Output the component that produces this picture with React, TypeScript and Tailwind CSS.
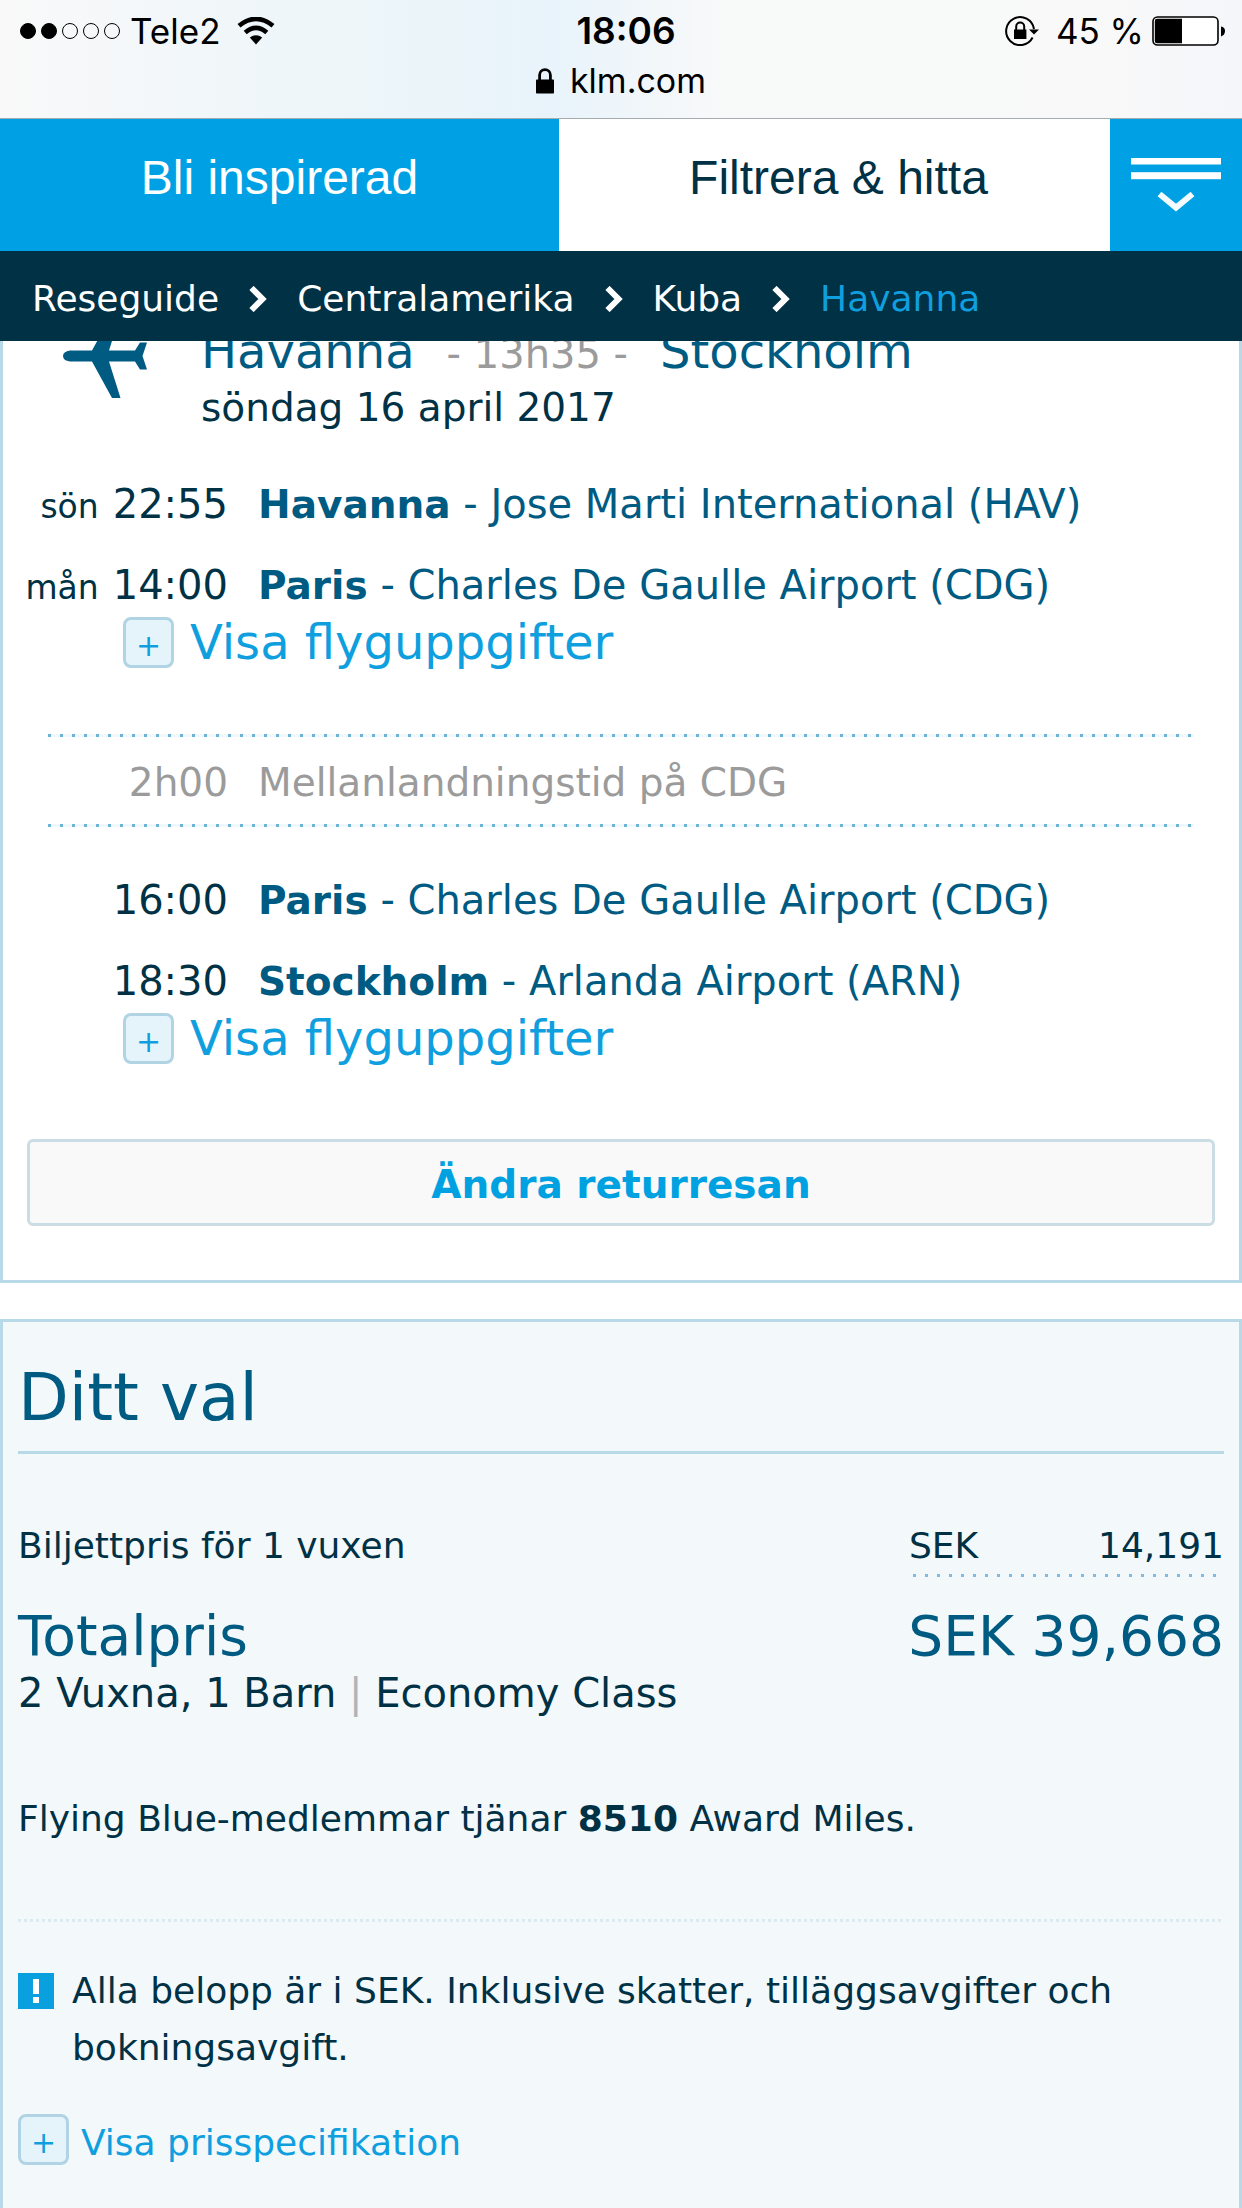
import type { ReactNode } from "react";

const DOTS =
  "h-[3px] bg-[repeating-linear-gradient(90deg,#6db3d6_0_3px,#f1f8fc_3px_12px)]";

function Wifi() {
  return (
    <svg viewBox="0 0 38 28" className="h-7 w-[38px]" aria-hidden="true">
      <path d="M19 27.5 L12.8 20.6 Q19 15.8 25.2 20.6 Z" />
      <path d="M8.2 15.6 Q19 6.2 29.8 15.6" fill="none" stroke="#000" strokeWidth="4.6" />
      <path d="M2 8.8 Q19 -5 36 8.8" fill="none" stroke="#000" strokeWidth="4.6" />
    </svg>
  );
}

function RotationLock() {
  return (
    <svg viewBox="0 0 36 32" className="h-8 w-9" aria-hidden="true">
      <path
        d="M28.6 22.5 A14 14 0 1 1 30 14"
        fill="none"
        stroke="#000"
        strokeWidth="2"
      />
      <path d="M25 14.5 H35 L30 19.5 Z" />
      <rect x="10" y="14.5" width="12.4" height="9.5" />
      <path d="M12.2 15 V11.5 a4 4 0 0 1 8 0 V15" fill="none" stroke="#000" strokeWidth="2" />
    </svg>
  );
}

function Battery() {
  return (
    <svg viewBox="0 0 74 30" className="h-[30px] w-[74px]" aria-hidden="true">
      <rect x="1" y="1" width="65" height="28" rx="4.5" fill="#fff" stroke="#000" strokeWidth="1.6" />
      <path d="M5 2.8 H30 V27.2 H5 Q2.8 27.2 2.8 25 V5 Q2.8 2.8 5 2.8 Z" />
      <path d="M69 10.5 Q73 11 73 15 Q73 19 69 20.5 Z" />
    </svg>
  );
}

function StatusBar() {
  return (
    <div className="border-b border-[#a5acb0] bg-[linear-gradient(90deg,#f9f9f9_0%,#eff6f9_22%,#ebf5f9_35%,#e8f3fb_44%,#f8f9f9_58%,#f9f9f9_88%,#f5f6fa_100%)] font-['Inter',sans-serif] text-[35px] leading-[48px] text-black">
      <div className="grid grid-cols-3 items-center px-5 pt-[7px]">
        <div className="flex items-center">
          <div className="flex gap-[5px]">
            {[true, true, false, false, false].map((on, i) => (
              <span
                key={i}
                className={
                  on
                    ? "size-4 rounded-full border border-black bg-black"
                    : "size-4 rounded-full border border-black"
                }
              />
            ))}
          </div>
          <span className="ml-[10px]">Tele2</span>
          <span className="ml-4">
            <Wifi />
          </span>
        </div>
        <div className="pl-[10px] text-center text-[37px] font-semibold">18:06</div>
        <div className="-mr-1 flex items-center justify-end">
          <RotationLock />
          <span className="ml-4 text-[35px]">45 %</span>
          <span className="ml-2">
            <Battery />
          </span>
        </div>
      </div>
      <div className="flex items-center justify-center gap-4 pt-[2px] pb-[13px]">
        <svg viewBox="0 0 18 26" className="h-[26px] w-[18px]" aria-hidden="true">
          <rect x="0" y="11.5" width="18" height="14" rx="0.8" />
          <path d="M3.6 12 V7 a5.4 5.4 0 0 1 10.8 0 V12" fill="none" stroke="#000" strokeWidth="2.8" />
        </svg>
        <span className="text-[34px]">klm.com</span>
      </div>
    </div>
  );
}

function Tabs() {
  return (
    <nav className="grid h-[132px] grid-cols-[559fr_551fr_132px] font-['Liberation_Sans',Arial,sans-serif] text-5xl">
      <button className="bg-[#00a1e4] pb-[14px] text-white">Bli inspirerad</button>
      <button className="bg-white pb-[14px] pl-2 text-[#003145]">Filtrera &amp; hitta</button>
      <button className="flex justify-center bg-[#00a1e4] pt-[39px]" aria-label="Meny">
        <svg viewBox="0 0 90 54" className="h-[54px] w-[90px]" aria-hidden="true">
          <rect x="0" y="0" width="90" height="6.5" fill="#fff" />
          <rect x="0" y="14.2" width="90" height="7" fill="#fff" />
          <path d="M28.5 36 L45 49.5 L61.5 36" fill="none" stroke="#f4fbff" strokeWidth="6" />
        </svg>
      </button>
    </nav>
  );
}

function Breadcrumb() {
  return (
    <nav
      aria-label="Sökväg"
      className="flex h-[90px] items-center gap-[30px] bg-[#003145] px-8 pt-[6px] text-4xl text-white"
    >
      {["Reseguide", "Centralamerika", "Kuba"].map((label) => (
        <span key={label} className="flex items-center gap-[30px]">
          <a href="#">{label}</a>
          <svg viewBox="0 0 18 26" className="h-[26px] w-[18px]" aria-hidden="true">
            <path d="M2.5 2 L13.5 13 L2.5 24" fill="none" stroke="#fff" strokeWidth="6" />
          </svg>
        </span>
      ))}
      <a href="#" className="text-[#0f9fdf]">
        Havanna
      </a>
    </nav>
  );
}

function PlusBox() {
  return (
    <span className="flex size-[51px] shrink-0 items-center justify-center rounded-lg border-3 border-[#b0d4e3] bg-[#e5f3fb] pt-[6px] text-3xl leading-9">
      +
    </span>
  );
}

function Stop({ day, time, city, airport }: { day?: string; time: string; city: string; airport: string }) {
  return (
    <div className="flex h-12 text-[40px] leading-[48px]">
      <div className="flex w-[225px] shrink-0 items-baseline justify-end gap-[14px]">
        {day && <span className="text-[33px]">{day}</span>}
        <span>{time}</span>
      </div>
      <div className="ml-[30px] text-[#005b82]">
        <b className="text-[39px]">{city}</b> - {airport}
      </div>
    </div>
  );
}

function Leg({ children }: { children: ReactNode }) {
  return (
    <div>
      <div className="flex flex-col gap-[33px]">{children}</div>
      <button className="mt-2 ml-[120px] flex items-center gap-4 text-5xl leading-[51px] text-[#0f9fdf]">
        <PlusBox />
        Visa flyguppgifter
      </button>
    </div>
  );
}

function ReturnFlight() {
  return (
    <section className="-mt-5 border-x-3 border-b-3 border-[#b8dae8] bg-white pb-[54px] text-[39px]">
      <div className="flex">
        <svg viewBox="0 0 84 84" className="mt-[-7px] ml-[60px] h-[84px] w-[84px]" aria-hidden="true">
          <path
            d="M7 36.5 H29 L49 0 H57.5 L46 36.5 H72 L77 28.5 H84 L79.5 42 L84 55.5 H77 L72 47.5 H46 L57.5 84 H49 L29 47.5 H7 Q0 46.5 0 42 Q0 37.5 7 36.5 Z"
            fill="#005b82"
          />
        </svg>
        <div className="ml-[54px]">
          <h2 className="flex h-[60px] items-baseline text-5xl leading-[60px] text-[#005b82]">
            Havanna
            <span className="mx-8 text-[40px] text-[#9b9b9b]">- 13h35 -</span>
            Stockholm
          </h2>
          <p className="leading-[54px]">söndag 16 april 2017</p>
        </div>
      </div>
      <div className="mt-[45px]">
        <Leg>
          <Stop day="sön" time="22:55" city="Havanna" airport="Jose Marti International (HAV)" />
          <Stop day="mån" time="14:00" city="Paris" airport="Charles De Gaulle Airport (CDG)" />
        </Leg>
      </div>
      <div className="mx-[45px] mt-[66px]">
        <div className={DOTS} />
        <div className="flex pt-[22px] pb-[17px] leading-[48px] text-[#9b9b9b]">
          <div className="w-[180px] shrink-0 text-right">2h00</div>
          <div className="ml-[30px]">Mellanlandningstid på CDG</div>
        </div>
        <div className={DOTS} />
      </div>
      <div className="mt-[49px]">
        <Leg>
          <Stop time="16:00" city="Paris" airport="Charles De Gaulle Airport (CDG)" />
          <Stop time="18:30" city="Stockholm" airport="Arlanda Airport (ARN)" />
        </Leg>
      </div>
      <div className="mt-[75px] px-6">
        <button className="h-[87px] w-full rounded-md border-3 border-[#cadce4] bg-[#f9f9f9] pt-[6px] font-bold text-[#00a1e0]">
          Ändra returresan
        </button>
      </div>
    </section>
  );
}

function Summary() {
  return (
    <section className="mt-9 flex-1 border-x-3 border-t-3 border-[#b8dae8] bg-[#f3f8fb] px-[15px] pt-[37px] text-4xl leading-[48px]">
      <h2 className="border-b-3 border-[#b8dae8] pb-[14px] text-[66px] leading-[78px] text-[#005b82]">
        Ditt val
      </h2>
      <div className="mt-[68px] flex justify-between">
        <div>Biljettpris för 1 vuxen</div>
        <div className="w-[315px]">
          <div className="flex justify-between">
            <span>SEK</span>
            <span>14,191</span>
          </div>
          <div className="mx-1 mt-1 h-[3px] bg-[repeating-linear-gradient(90deg,#7fbde0_0_3px,transparent_3px_12px)]" />
        </div>
      </div>
      <div className="mt-[26px] flex justify-between text-[55px] leading-[66px] text-[#005b82]">
        <div>Totalpris</div>
        <div>SEK 39,668</div>
      </div>
      <p className="text-[40px]">
        2 Vuxna, 1 Barn <span className="text-[#b0b4b6]">|</span> Economy Class
      </p>
      <p className="mt-[78px]">
        Flying Blue-medlemmar tjänar <b>8510</b> Award Miles.
      </p>
      <div className="mt-[76px] h-[3px] bg-[repeating-linear-gradient(90deg,#dbe9f0_0_3px,transparent_3px_6px)]" />
      <div className="mt-10 flex gap-[18px] leading-[57px]">
        <svg viewBox="0 0 36 36" className="mt-[11px] size-9 shrink-0" aria-hidden="true">
          <rect width="36" height="36" fill="#0aa0e0" />
          <rect x="15" y="6" width="6" height="15" fill="#fff" />
          <rect x="15" y="24" width="6" height="6" fill="#fff" />
        </svg>
        <p>Alla belopp är i SEK. Inklusive skatter, tilläggsavgifter och bokningsavgift.</p>
      </div>
      <button className="mt-[38px] flex items-end gap-3 leading-[45px] text-[#0f9fdf]">
        <PlusBox />
        Visa prisspecifikation
      </button>
    </section>
  );
}

export default function App() {
  return (
    <div className="flex min-h-screen flex-col bg-white font-['DejaVu_Sans',Verdana,sans-serif] text-[#003145]">
      <header className="relative z-10">
        <StatusBar />
        <Tabs />
        <Breadcrumb />
      </header>
      <main className="flex flex-1 flex-col">
        <ReturnFlight />
        <Summary />
      </main>
    </div>
  );
}
